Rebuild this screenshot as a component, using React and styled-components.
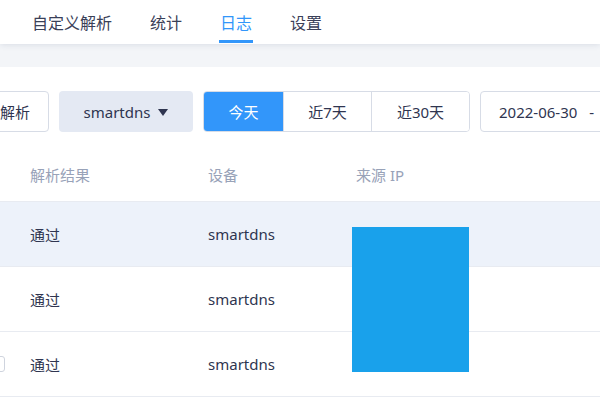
import React from 'react';
import styled, { createGlobalStyle } from 'styled-components';

const GlobalStyle = createGlobalStyle`
  html, body {
    margin: 0;
    padding: 0;
    background: #fff;
    overflow: hidden;
  }
  body {
    font-family: "Noto Sans", "Noto Sans CJK SC", sans-serif;
    color: #2f3550;
  }
`;

const Page = styled.div`
  width: 600px;
  height: 400px;
  overflow: hidden;
  background: #f3f5f8;
`;

const Nav = styled.div`
  height: 44px;
  background: #fff;
  display: flex;
  padding-left: 13px;
  box-shadow: 0 1px 6px rgba(40, 60, 100, 0.12);
  position: relative;
  z-index: 1;
`;

const Tab = styled.div`
  padding: 0 19px;
  height: 44px;
  display: flex;
  align-items: center;
  font-size: 16px;
  color: ${(p) => (p.$active ? '#3296fa' : '#3a4058')};
  position: relative;
  &::after {
    content: '';
    display: ${(p) => (p.$active ? 'block' : 'none')};
    position: absolute;
    left: 18px;
    right: 18px;
    bottom: 1px;
    height: 3px;
    background: #3296fa;
  }
`;

const Card = styled.div`
  margin-top: 23px;
  background: #fff;
  height: 400px;
  padding-top: 24px;
  margin-left: -60px;
`;

const Toolbar = styled.div`
  display: flex;
  align-items: center;
  gap: 10px;
  height: 41px;
`;

const Input = styled.div`
  box-sizing: border-box;
  width: ${(p) => p.$w}px;
  height: 41px;
  border: 1px solid #d7dce6;
  border-radius: 4px;
  display: flex;
  align-items: center;
  justify-content: ${(p) => (p.$right ? 'flex-end' : 'flex-start')};
  padding: 0 18px;
  font-size: 15px;
  white-space: nowrap;
  overflow: hidden;
  flex-shrink: 0;
`;

const Sep = styled.span`
  padding: 0 12px;
`;

const Select = styled.div`
  box-sizing: border-box;
  width: 134px;
  height: 41px;
  border-radius: 4px;
  background: #e4e9f3;
  display: flex;
  align-items: center;
  justify-content: center;
  gap: 8px;
  font-size: 15px;
  flex-shrink: 0;
`;

const Caret = styled.span`
  width: 0;
  height: 0;
  border-left: 5px solid transparent;
  border-right: 5px solid transparent;
  border-top: 7px solid #2f3550;
  margin-top: 1px;
`;

const Segments = styled.div`
  display: flex;
  height: 41px;
  border: 1px solid #d7dce6;
  border-radius: 4px;
  overflow: hidden;
  box-sizing: border-box;
  flex-shrink: 0;
`;

const Seg = styled.div`
  width: ${(p) => p.$w}px;
  display: flex;
  align-items: center;
  justify-content: center;
  font-size: 15px;
  background: ${(p) => (p.$active ? '#3296fa' : '#fff')};
  color: ${(p) => (p.$active ? '#fff' : '#2f3550')};
  border-left: ${(p) => (p.$first ? 'none' : '1px solid #d7dce6')};
`;

const Table = styled.div`
  margin-top: 16px;
  position: relative;
`;

const Row = styled.div`
  display: grid;
  grid-template-columns: 90px 178px 148px 1fr;
  height: ${(p) => (p.$head ? 53 : 64)}px;
  align-items: center;
  border-bottom: 1px solid #e8ebf1;
  background: ${(p) => (p.$hover ? '#edf2fa' : '#fff')};
  font-size: 15px;
  color: ${(p) => (p.$head ? '#98a2b8' : '#2f3550')};
`;

const Check = styled.span`
  justify-self: end;
  width: 14px;
  height: 14px;
  border: 1px solid #cfd4de;
  border-radius: 3px;
  visibility: ${(p) => (p.$show ? 'visible' : 'hidden')};
  transform: translateX(-25px);
`;

const Redact = styled.div`
  position: absolute;
  left: 412px;
  top: 79px;
  width: 117px;
  height: 145px;
  background: #19a1eb;
`;

const rows = [
  { hover: true, check: false },
  { hover: false, check: false },
  { hover: false, check: true },
];

export default function App() {
  return (
    <Page>
      <GlobalStyle />
      <Nav>
        <Tab>自定义解析</Tab>
        <Tab>统计</Tab>
        <Tab $active>日志</Tab>
        <Tab>设置</Tab>
      </Nav>
      <Card>
        <Toolbar>
          <Input $w={109} $right>域名解析</Input>
          <Select>
            smartdns <Caret />
          </Select>
          <Segments>
            <Seg $w={79} $active $first>今天</Seg>
            <Seg $w={87}>近7天</Seg>
            <Seg $w={97}>近30天</Seg>
          </Segments>
          <Input $w={260}>
            2022-06-30<Sep>-</Sep>2022-06-30
          </Input>
        </Toolbar>
        <Table>
          <Row $head>
            <span />
            <span>解析结果</span>
            <span>设备</span>
            <span>来源 IP</span>
          </Row>
          {rows.map((r, i) => (
            <Row key={i} $hover={r.hover}>
              <Check $show={r.check} />
              <span>通过</span>
              <span>smartdns</span>
              <span />
            </Row>
          ))}
          <Redact />
        </Table>
      </Card>
    </Page>
  );
}
